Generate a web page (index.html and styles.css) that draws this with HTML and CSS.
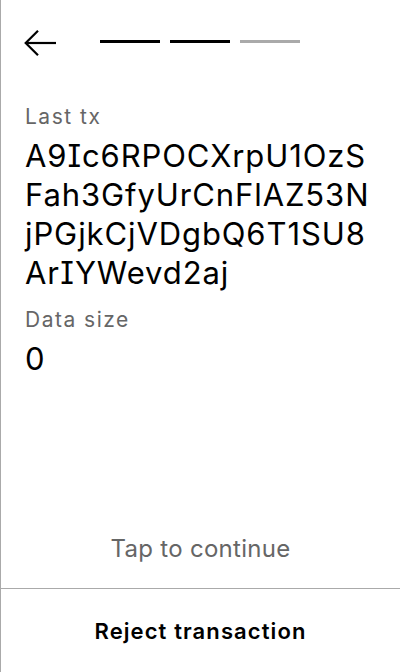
FILE: index.html
```html
<!DOCTYPE html>
<html>
<head>
<meta charset="utf-8">
<link rel="stylesheet" href="styles.css">
</head>
<body>
<div class="screen">
  <header class="top">
    <button class="back" aria-label="Back">
      <svg width="32" height="28" viewBox="0 0 32 28" fill="none" stroke="#000" stroke-width="2.2">
        <path d="M32 14H2"/>
        <path d="M14 1.8L1.7 14L14 26.2"/>
      </svg>
    </button>
    <div class="steps">
      <span class="step on"></span>
      <span class="step on"></span>
      <span class="step"></span>
    </div>
  </header>
  <main class="content">
    <div class="field">
      <div class="label">Last tx</div>
      <div class="value">A9Ic6RPOCXrpU1OzSFah3GfyUrCnFlAZ53NjPGjkCjVDgbQ6T1SU8ArIYWevd2aj</div>
    </div>
    <div class="field">
      <div class="label">Data size</div>
      <div class="value">0</div>
    </div>
  </main>
  <div class="tap">Tap to continue</div>
  <footer class="reject">Reject transaction</footer>
</div>
</body>
</html>
```
FILE: styles.css
```css
* { box-sizing: border-box; }
html, body { margin: 0; padding: 0; background: #fff; }
body { font-family: Inter, "Noto Sans", sans-serif; color: #000; }
.screen {
  width: 400px;
  height: 672px;
  border-left: 1px solid #aaa;
  display: flex;
  flex-direction: column;
}
.top {
  display: flex;
  align-items: center;
  padding: 29px 0 0 23px;
  height: 57px;
}
.back {
  border: 0;
  background: none;
  padding: 0;
  width: 32px;
  height: 28px;
  display: block;
}
.back svg { display: block; }
.steps {
  display: flex;
  gap: 10px;
  margin-left: 44px;
  margin-top: -3px;
}
.step {
  width: 60px;
  height: 3px;
  background: #aaa;
}
.step.on { background: #000; }
.content {
  padding: 47px 27px 0 24px;
  flex: 1;
}
.field { margin-bottom: 15px; }
.label {
  font-size: 21px;
  line-height: 26px;
  letter-spacing: 1.5px;
  color: #666;
  margin-bottom: 6px;
}
.value {
  font-size: 31px;
  line-height: 39px;
  letter-spacing: 0.9px;
  word-break: break-all;
  font-feature-settings: "cv08";
}
.tap {
  text-align: center;
  font-size: 24px;
  line-height: 29px;
  letter-spacing: 0.3px;
  color: #666;
  padding-bottom: 25px;
}
.reject {
  border-top: 1px solid #aaa;
  height: 84px;
  display: flex;
  align-items: center;
  justify-content: center;
  font-size: 22px;
  font-weight: 600;
  letter-spacing: 1.1px;
}
```
